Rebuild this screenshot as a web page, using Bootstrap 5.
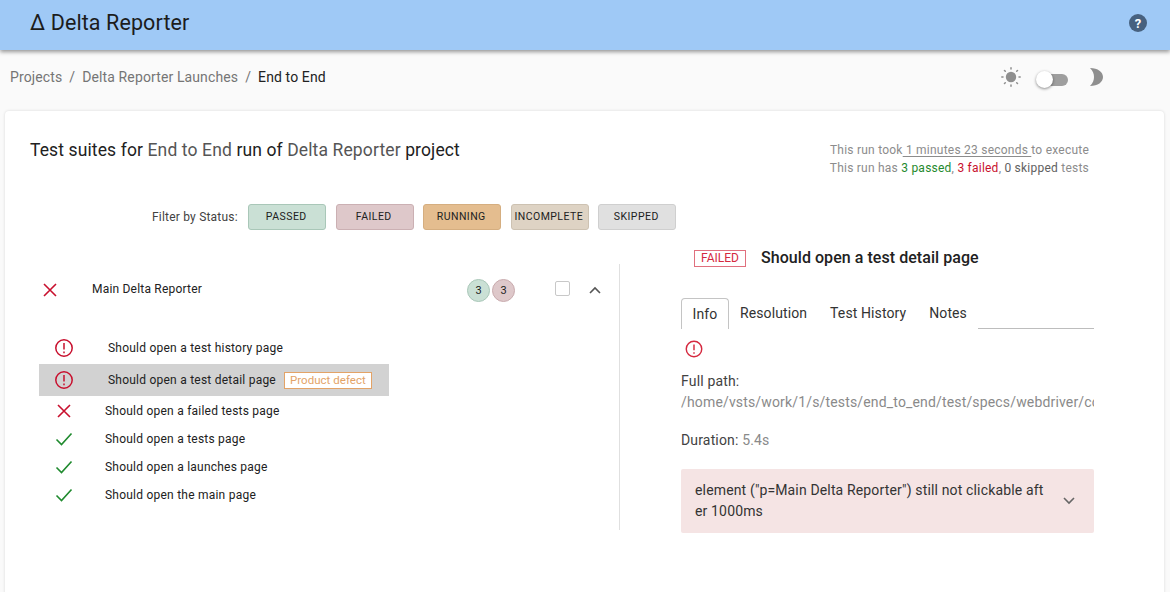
<!DOCTYPE html>
<html lang="en">
<head>
  <meta charset="UTF-8" />
  <meta name="viewport" content="width=device-width, initial-scale=1.0"/>
  <title>Delta Reporter</title>
  <link href="https://cdn.jsdelivr.net/npm/bootstrap@5.3.3/dist/css/bootstrap.min.css" rel="stylesheet"/>
  <style>
    html, body { height: 592px; overflow: hidden; }
    body { background-color: #fafafa; font-family: Roboto, "Liberation Sans", sans-serif; color: #212121; }
    .top-bar { height: 50px; background-color: #9fc9f6; box-shadow: 0 2px 4px rgba(0,0,0,.4); padding: 0 23px 4px 30px; }
    .brand-name { font-size: 21.5px; color: #1c1c1c; letter-spacing: .1px; }
    .crumb-row { height: 61px; padding: 0 0 7px 10px; }
    .crumb-row .breadcrumb { font-size: 14px; letter-spacing: .12px; margin: 0; }
    .crumb-row .breadcrumb-item + .breadcrumb-item { padding-left: 7px; }
    .crumb-row .breadcrumb-item + .breadcrumb-item::before { padding-right: 7px; color: #757575; }
    .crumb-row a { color: #757575; text-decoration: none; }
    .crumb-row .breadcrumb-item.active { color: #212121; }
    .theme-switch { padding-right: 66px; }
    .switch-track { width: 28px; height: 12px; margin: 5px 0 0 19px; border-radius: 6px; background: #9e9e9e; }
    .switch-thumb { width: 17px; height: 17px; left: -4px; top: -3px; border-radius: 50%; background: #fff; box-shadow: 0 1px 3px rgba(0,0,0,.45); }
    .moon-icon { margin-left: 22px; }
    .main-panel { margin: 0 6px 0 5px; height: 500px; border: 0; border-radius: 4px; box-shadow: 0 0 3px rgba(0,0,0,.14); padding: 0 25px; }
    .run-head { padding-top: 28px; height: 93px; }
    .run-title { font-size: 17.5px; font-weight: 400; letter-spacing: .12px; line-height: 22px; margin: 0; }
    .run-title span { color: #555; }
    .run-info { font-size: 12px; letter-spacing: .23px; line-height: 18px; color: #8c8c8c; text-align: right; padding: 0 50px 0 0; margin-top: 2px; }
    .run-info u { text-underline-offset: 2px; }
    .txt-pass { color: #1f8a2e; }
    .txt-fail { color: #c8102e; }
    .txt-skip { color: #616161; }
    .filter-row { padding-left: 122px; gap: 9.5px; height: 26px; }
    .filter-label { font-size: 12px; letter-spacing: .2px; margin-right: 1px; color: #424242; }
    .filter-btn { width: 78px; height: 26px; padding: 0 2px 0 0; font-size: 10.5px; font-weight: 400; letter-spacing: .45px; line-height: 24px; text-transform: uppercase; color: #212121; border-radius: 3px; }
    .f-pass { background: #cae0d5; border-color: #a9c7b8; }
    .f-fail { background: #dec8ca; border-color: #cbb0b3; }
    .f-run { background: #e4bd8f; border-color: #d5ae80; }
    .f-inc { background: #ded3c4; border-color: #cdc2b2; }
    .f-skip { background: #e0e0e0; border-color: #cfcfcf; }
    .split-row { margin-top: 34px; }
    .left-col { width: 590px; height: 266px; border-right: 1px solid #e0e0e0; flex: none; }
    .suite-row { height: 52px; padding-left: 12px; }
    .suite-name { font-size: 12px; letter-spacing: .2px; margin-left: 34px; width: 375px; margin-top: -2px; }
    .count-dot { width: 23px; height: 23px; margin-right: 2px; border-radius: 50%; font-size: 11px; line-height: 21px; text-align: center; }
    .dot-pass { background: #cae0d5; border: 1px solid #a9c7b8; }
    .dot-fail { background: #dec8ca; border: 1px solid #c9abae; }
    .fake-check { width: 15px; height: 15px; margin-left: 38px; border: 1px solid #c8c8c8; border-radius: 2px; margin-top: -4px; }
    .suite-chevron { margin-left: 19px; }
    .test-list { margin: 16px 0 0 9px; width: 350px; }
    .test-row { height: 28px; padding-top: 2px; font-size: 12px; letter-spacing: .23px; padding-left: 15px; }
    .test-row .icon-slot { width: 20px; flex: none; }
    .test-row .test-name { margin-left: 31px; }
    .test-row.wide { height: 32px; padding-top: 0; }
    .test-row.wide .test-name { margin: 0 0 0 34px; }
    .test-row.selected { background: #d2d2d2; }
    .defect-tag { margin: 1px 0 0 8px; padding: 0 5px; height: 17px; line-height: 15px; font-size: 11.5px; letter-spacing: .03px; color: #e3a367; background: #fff; border: 1px solid #e3a367; }
    .right-col { margin-left: 61px; width: 413px; flex: none; margin-top: -23px; }
    .detail-head { height: 34px; padding-left: 13px; }
    .fail-tag { width: 52px; height: 17px; line-height: 15px; font-size: 12px; text-align: center; color: #d5293f; border: 1px solid #e0707e; }
    .detail-title { font-size: 16px; font-weight: 500; letter-spacing: .05px; margin: 0 0 0 15px; }
    .detail-tabs { margin-top: 23px; height: 31px; border-bottom: 0; font-size: 14px; letter-spacing: .1px; flex-wrap: nowrap; }
    .detail-tabs .nav-link { height: 31px; padding: 5px 0; color: #333; border: 0; }
    .detail-tabs .nav-item:nth-child(1) .nav-link { width: 48px; text-align: center; color: #333; border: 1px solid #c4c4c4; border-bottom: 0; border-radius: 4px 4px 0 0; }
    .detail-tabs .nav-item:nth-child(2) { margin-left: 11px; }
    .detail-tabs .nav-item:nth-child(3) { margin-left: 23px; }
    .detail-tabs .nav-item:nth-child(4) { margin-left: 23px; }
    .tab-fill { flex: 1; margin-left: 11px; border-bottom: 1px solid #bdbdbd; }
    .detail-icon { padding: 11px 0 0 4px; height: 38px; }
    .info-line { font-size: 14px; line-height: 21px; letter-spacing: .16px; color: #424242; white-space: nowrap; overflow: hidden; }
    .info-muted { color: #8a8a8a; }
    .duration-line { margin-top: 17px; }
    .error-box { height: 64px; margin-top: 18px; padding: 0 19px 0 14px; background: #f5e4e4; border-radius: 2px; font-size: 14px; line-height: 21px; letter-spacing: .15px; color: #333; }
    .error-text { width: 352px; word-break: break-all; }
  </style>
</head>
<body>

<nav class="top-bar d-flex align-items-center justify-content-between">
  <span class="brand-name">Δ Delta Reporter</span>
  <svg width="18" height="18" viewBox="0 0 18 18"><circle cx="9" cy="9" r="9" fill="#47617f"/><text x="9" y="14" text-anchor="middle" font-family="Roboto" font-weight="700" font-size="13" fill="#fff">?</text></svg>
</nav>

<div class="crumb-row d-flex align-items-center justify-content-between">
  <ol class="breadcrumb">
    <li class="breadcrumb-item"><a href="#">Projects</a></li>
    <li class="breadcrumb-item"><a href="#">Delta Reporter Launches</a></li>
    <li class="breadcrumb-item active">End to End</li>
  </ol>
  <div class="theme-switch d-flex align-items-center">
    <svg width="20" height="20" viewBox="0 0 20 20" fill="#8f8f8f"><circle cx="10" cy="10" r="5.2"/><g stroke="#8f8f8f" stroke-width="1.5" stroke-linecap="round"><path d="M10 .8v1.2M10 18v1.2M.8 10h1.2M18 10h1.2M3.5 3.5l.8.8M15.7 15.7l.8.8M3.5 16.5l.8-.8M15.7 4.3l.8-.8"/></g></svg>
    <div class="switch-track position-relative"><div class="switch-thumb position-absolute"></div></div>
    <svg class="moon-icon" width="14" height="18" viewBox="0 0 14 18" fill="#8f8f8f"><path d="M0 0C8 0 13 4 13 9C13 14 8 18 0 18C3 15 4 12 4 9C4 6 3 3 0 0z"/></svg>
  </div>
</div>

<div class="card main-panel">
  <div class="run-head d-flex justify-content-between">
    <h5 class="run-title">Test suites for <span>End to End</span> run of <span>Delta Reporter</span> project</h5>
    <div class="run-info">
      This run took<u> 1 minutes 23 seconds </u>to execute<br>
      This run has <span class="txt-pass">3 passed</span>, <span class="txt-fail">3 failed</span>, <span class="txt-skip">0 skipped</span> tests
    </div>
  </div>

  <div class="filter-row d-flex align-items-center">
    <span class="filter-label">Filter by Status:</span>
    <button class="btn filter-btn f-pass">Passed</button>
    <button class="btn filter-btn f-fail">Failed</button>
    <button class="btn filter-btn f-run">Running</button>
    <button class="btn filter-btn f-inc">Incomplete</button>
    <button class="btn filter-btn f-skip">Skipped</button>
  </div>

  <div class="split-row d-flex">
    <div class="left-col">
      <div class="suite-row d-flex align-items-center">
        <svg width="16" height="16" viewBox="0 0 16 16" stroke="#c8102e" stroke-width="1.6" fill="none"><path d="M2 2l12 12M14 2L2 14"/></svg>
        <div class="suite-name">Main Delta Reporter</div>
        <div class="count-dot dot-pass">3</div>
        <div class="count-dot dot-fail">3</div>
        <div class="fake-check"></div>
        <svg class="suite-chevron" width="12" height="8" viewBox="0 0 12 8" stroke="#555" stroke-width="1.6" fill="none"><path d="M1 7l5-5 5 5"/></svg>
      </div>

      <div class="test-list">
        <div class="test-row wide d-flex align-items-center">
          <svg class="icon-slot" width="20" height="20" viewBox="0 0 20 20" fill="none" stroke="#c8102e" stroke-width="1.5"><circle cx="10" cy="10" r="8.2"/><path d="M10 5v6.5M10 13.6v1.6"/></svg>
          <span class="test-name">Should open a test history page</span>
        </div>
        <div class="test-row wide selected d-flex align-items-center">
          <svg class="icon-slot" width="20" height="20" viewBox="0 0 20 20" fill="none" stroke="#c8102e" stroke-width="1.5"><circle cx="10" cy="10" r="8.2"/><path d="M10 5v6.5M10 13.6v1.6"/></svg>
          <span class="test-name">Should open a test detail page</span>
          <span class="defect-tag">Product defect</span>
        </div>
        <div class="test-row d-flex align-items-center">
          <svg class="icon-slot" width="20" height="16" viewBox="0 0 20 16" stroke="#c8102e" stroke-width="1.6" fill="none"><path d="M4 2l12 12M16 2L4 14"/></svg>
          <span class="test-name">Should open a failed tests page</span>
        </div>
        <div class="test-row d-flex align-items-center">
          <svg class="icon-slot" width="20" height="16" viewBox="0 0 20 16" stroke="#1f8a2e" stroke-width="1.6" fill="none"><path d="M2.5 8.5l5 5L17.5 2.5"/></svg>
          <span class="test-name">Should open a tests page</span>
        </div>
        <div class="test-row d-flex align-items-center">
          <svg class="icon-slot" width="20" height="16" viewBox="0 0 20 16" stroke="#1f8a2e" stroke-width="1.6" fill="none"><path d="M2.5 8.5l5 5L17.5 2.5"/></svg>
          <span class="test-name">Should open a launches page</span>
        </div>
        <div class="test-row d-flex align-items-center">
          <svg class="icon-slot" width="20" height="16" viewBox="0 0 20 16" stroke="#1f8a2e" stroke-width="1.6" fill="none"><path d="M2.5 8.5l5 5L17.5 2.5"/></svg>
          <span class="test-name">Should open the main page</span>
        </div>
      </div>
    </div>

    <div class="right-col">
      <div class="detail-head d-flex align-items-center">
        <span class="fail-tag">FAILED</span>
        <h6 class="detail-title">Should open a test detail page</h6>
      </div>
      <ul class="nav detail-tabs">
        <li class="nav-item"><a class="nav-link" href="#">Info</a></li>
        <li class="nav-item"><a class="nav-link" href="#">Resolution</a></li>
        <li class="nav-item"><a class="nav-link" href="#">Test History</a></li>
        <li class="nav-item"><a class="nav-link" href="#">Notes</a></li>
        <li class="tab-fill"></li>
      </ul>
      <div class="detail-icon">
        <svg class="d-block" width="18" height="18" viewBox="0 0 20 20" fill="none" stroke="#d5293f" stroke-width="1.6"><circle cx="10" cy="10" r="8.6"/><path d="M10 5v6.5M10 13.6v1.6"/></svg>
      </div>
      <div class="info-line mt-1">Full path:</div>
      <div class="info-line info-muted">/home/vsts/work/1/s/tests/end_to_end/test/specs/webdriver/core/test_detail_page.spec.ts</div>
      <div class="info-line duration-line">Duration: <span class="info-muted">5.4s</span></div>
      <div class="error-box d-flex align-items-center justify-content-between">
        <div class="error-text">element ("p=Main Delta Reporter") still not clickable after 1000ms</div>
        <svg width="12" height="8" viewBox="0 0 12 8" stroke="#666" stroke-width="1.6" fill="none"><path d="M1 1l5 5 5-5"/></svg>
      </div>
    </div>
  </div>
</div>

<script src="https://cdn.jsdelivr.net/npm/bootstrap@5.3.3/dist/js/bootstrap.bundle.min.js"></script>
</body>
</html>
